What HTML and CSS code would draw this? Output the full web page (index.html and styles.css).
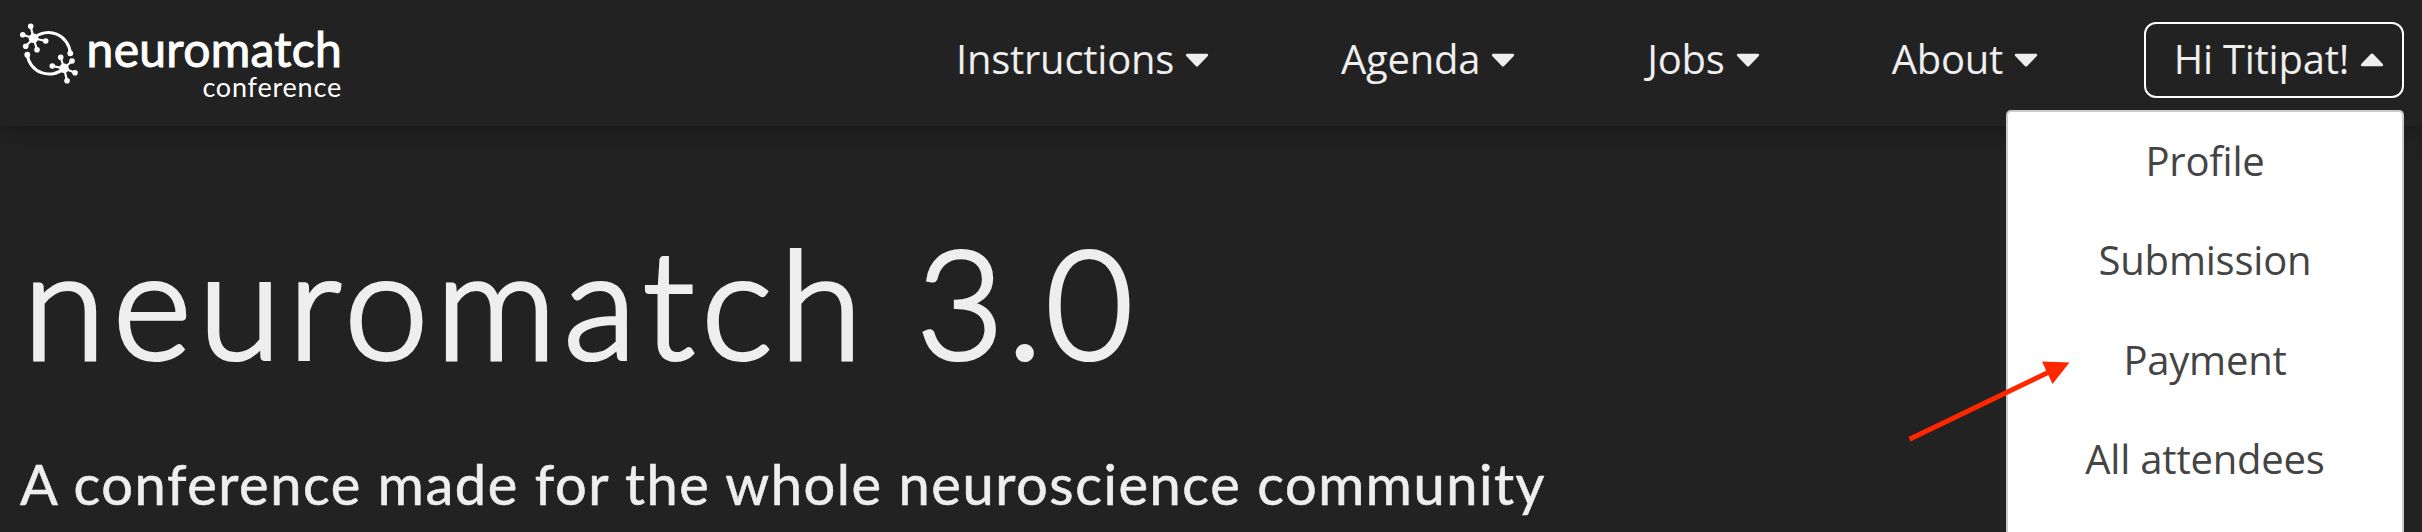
FILE: index.html
```html
<!DOCTYPE html>
<html lang="en">
<head>
<meta charset="utf-8">
<title>neuromatch conference</title>
<link rel="stylesheet" href="styles.css">
</head>
<body>
<header class="header">
  <a class="logo">
    <svg class="logo-mark" viewBox="0 0 60 62" aria-hidden="true">
      <g fill="none" stroke="#fff" stroke-width="3">
        <path d="M13.5 15.3A22 22 0 0 1 50.3 30.3M7.3 31.7A22 22 0 0 0 44 45.3"/>
        <path stroke-width="2.2" d="M13.5 15.3L10.7 3.3M13.5 15.3L2.7 11.7M13.5 15.3L5.7 23.3M13.5 15.3L17 26.7M13.5 15.3L25.7 18M44 45.3L40.7 34.3M44 45.3L52 38M44 45.3L55 49.7M44 45.3L47 57.7M44 45.3L32.3 43"/>
      </g>
      <g fill="#fff">
        <circle cx="13.5" cy="15.3" r="4.8"/><circle cx="44" cy="45.3" r="4.8"/>
        <circle cx="10.7" cy="3.3" r="2.8"/><circle cx="2.7" cy="11.7" r="2.8"/><circle cx="5.7" cy="23.3" r="2.8"/><circle cx="17" cy="26.7" r="2.8"/><circle cx="25.7" cy="18" r="2.8"/>
        <circle cx="40.7" cy="34.3" r="2.8"/><circle cx="52" cy="38" r="2.8"/><circle cx="55" cy="49.7" r="2.8"/><circle cx="47" cy="57.7" r="2.8"/><circle cx="32.3" cy="43" r="2.8"/>
        <circle cx="50.3" cy="30.3" r="2.9"/><circle cx="7.3" cy="31.7" r="2.9"/>
      </g>
    </svg>
    <span class="logo-text"><span class="logo-name">neuromatch</span><span class="logo-sub">conference</span></span>
  </a>
  <nav class="nav">
    <a class="nav-item">Instructions<svg class="caret" viewBox="0 0 24 14"><path d="M1.8 .7H22.2Q24 1.5 22.8 3L13.2 13Q12 14 10.8 13L1.2 3Q0 1.5 1.8 .7Z"/></svg></a>
    <a class="nav-item">Agenda<svg class="caret" viewBox="0 0 24 14"><path d="M1.8 .7H22.2Q24 1.5 22.8 3L13.2 13Q12 14 10.8 13L1.2 3Q0 1.5 1.8 .7Z"/></svg></a>
    <a class="nav-item">Jobs<svg class="caret" viewBox="0 0 24 14"><path d="M1.8 .7H22.2Q24 1.5 22.8 3L13.2 13Q12 14 10.8 13L1.2 3Q0 1.5 1.8 .7Z"/></svg></a>
    <a class="nav-item">About<svg class="caret" viewBox="0 0 24 14"><path d="M1.8 .7H22.2Q24 1.5 22.8 3L13.2 13Q12 14 10.8 13L1.2 3Q0 1.5 1.8 .7Z"/></svg></a>
  </nav>
  <div class="account">
    <a class="account-button">Hi Titipat!<svg class="caret" viewBox="0 0 24 14"><path d="M1.8 13.3H22.2Q24 12.5 22.8 11L13.2 1Q12 0 10.8 1L1.2 11Q0 12.5 1.8 13.3Z"/></svg></a>
    <div class="menu">
      <a class="menu-item">Profile</a>
      <a class="menu-item">Submission</a>
      <a class="menu-item">Payment</a>
      <a class="menu-item">All attendees</a>
    </div>
  </div>
</header>
<main class="hero">
  <h1 class="title">neuromatch <span class="title-version">3.0</span></h1>
  <p class="subtitle">A conference made for the whole neuroscience community</p>
</main>
<svg class="arrow" viewBox="0 0 170 90" aria-hidden="true"><path d="M9.5 79.3L148 12.5" stroke="#ff2600" stroke-width="5"/><path d="M142 1.5L169.5 2.5L152.5 24Z" fill="#ff2600"/></svg>
</body>
</html>
```
FILE: styles.css
```css
* { box-sizing: border-box; }
body {
  margin: 0;
  height: 532px;
  overflow: hidden;
  background: #222;
  color: #eee;
  font-family: "Open Sans", sans-serif;
}
.header {
  position: relative;
  z-index: 1;
  display: flex;
  height: 126px;
  padding: 22px 18px 0 20px;
  background: #222;
  box-shadow: 0 4px 24px rgba(0, 0, 0, .3);
}
.logo { display: flex; color: #fff; font-family: Lato, sans-serif; }
.logo-mark { width: 60px; height: 62px; margin-top: 1px; }
.logo-text { display: flex; flex-direction: column; align-items: flex-end; width: 262px; padding-top: 2px; }
.logo-name {
  font-size: 48px;
  line-height: 50px;
  font-weight: 400;
  letter-spacing: .3px;
  -webkit-text-stroke: 1px #fff;
}
.logo-sub { margin-top: -1px; font-size: 27px; line-height: 27px; letter-spacing: .8px; }
.nav { display: flex; flex: 1; justify-content: flex-end; gap: 131px; margin-right: 106px; }
.nav-item {
  display: flex;
  align-items: center;
  height: 76px;
  padding-bottom: 3px;
  font-size: 40px;
  letter-spacing: -.25px;
  white-space: nowrap;
}
.caret { width: 24px; height: 14px; margin: 2px 0 0 11px; fill: #eee; }
.nav-item .caret { margin-right: 1px; }
.nav-item:last-child .caret { margin-right: 0; }
.account { position: relative; width: 260px; }
.account-button {
  display: flex;
  align-items: center;
  justify-content: flex-end;
  height: 76px;
  padding: 0 18px 3px 0;
  border: 2px solid #fff;
  border-radius: 12px;
  font-size: 40px;
  letter-spacing: -.25px;
  white-space: nowrap;
}
.menu {
  position: absolute;
  top: 88px;
  right: 0;
  width: 398px;
  height: 422px;
  background: #fff;
  border: 2px solid #ccc;
  border-bottom: 0;
  border-radius: 5px 5px 0 0;
}
.menu-item {
  display: block;
  height: 99.4px;
  line-height: 98px;
  font-size: 40px;
  letter-spacing: -.2px;
  color: #444;
  text-align: center;
}
.hero { padding: 79px 20px 0; font-family: Lato, sans-serif; white-space: nowrap; }
.title {
  margin: 0 0 0 3px;
  font-size: 150px;
  line-height: 192px;
  font-weight: 300;
  letter-spacing: 7.4px;
  word-spacing: -1px;
  -webkit-text-stroke: 4.2px #eee;
  stroke-linejoin: round;
}
.title-version { letter-spacing: 3.5px; }
.subtitle {
  margin: 53px 0 0;
  font-size: 56px;
  line-height: 68px;
  letter-spacing: 1.55px;
  -webkit-text-stroke: .6px #eee;
}
.arrow { position: absolute; z-index: 2; left: 1900px; top: 360px; width: 170px; height: 90px; }
```
